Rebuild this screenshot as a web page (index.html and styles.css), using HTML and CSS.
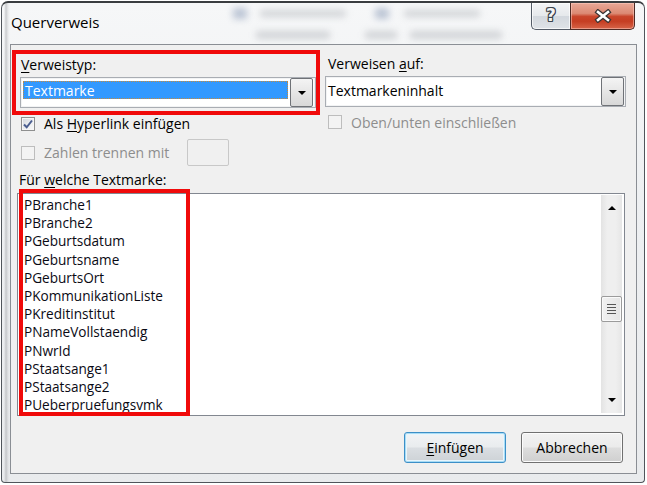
FILE: index.html
```html
<!DOCTYPE html>
<html lang="de">
<head>
<meta charset="utf-8">
<title>Querverweis</title>
<link rel="stylesheet" href="styles.css">
</head>
<body>
<div class="window">
  <div class="glass">
    <span class="blob b1"></span><span class="blob b2"></span><span class="blob b3"></span><span class="blob b4"></span>
    <span class="blob b5"></span><span class="blob b6"></span><span class="blob b7"></span>
  </div>
  <div class="titlebar">
    <span class="title">Querverweis</span>
    <div class="caption-btns">
      <div class="cbtn help">?</div>
      <div class="cbtn close">
        <svg width="18" height="14" viewBox="0 0 18 14"><path d="M4 3 L14 11 M14 3 L4 11" stroke="#3a3434" stroke-width="5" stroke-linecap="square" fill="none"/><path d="M4 3 L14 11 M14 3 L4 11" stroke="#fff" stroke-width="2.6" stroke-linecap="square" fill="none"/></svg>
      </div>
    </div>
  </div>
  <div class="client">
    <div class="top">
      <div class="col-left">
        <div class="mark box1">
          <div class="label"><u>V</u>erweistyp:</div>
          <div class="combo">
            <div class="combo-value selected">Textmarke</div>
            <div class="drop"><span class="tri-down"></span></div>
          </div>
        </div>
        <div class="check-row row1">
          <span class="cb"><svg width="12" height="12" viewBox="0 0 12 12"><path d="M2 6.5 L4.7 9.3 L10 2.5" stroke="#4a5d8f" stroke-width="2" fill="none"/></svg></span>
          <span class="cb-text">Als <u>H</u>yperlink einfügen</span>
        </div>
        <div class="check-row row2">
          <span class="cb disabled"></span>
          <span class="cb-text disabled-text zahlen">Zahlen trennen mit</span>
          <span class="small-input"></span>
        </div>
      </div>
      <div class="col-right">
        <div class="label right-label">Verweisen <u>a</u>uf:</div>
        <div class="combo">
          <div class="combo-value plain">Textmarkeninhalt</div>
          <div class="drop"><span class="tri-down"></span></div>
        </div>
        <div class="check-row row-right">
          <span class="cb disabled"></span>
          <span class="cb-text disabled-text">Oben/unten einschließen</span>
        </div>
      </div>
    </div>
    <div class="label list-label">Für <u>w</u>elche Textmarke:</div>
    <div class="listbox">
      <div class="items">
        <div class="item">PBranche1</div>
        <div class="item">PBranche2</div>
        <div class="item">PGeburtsdatum</div>
        <div class="item">PGeburtsname</div>
        <div class="item">PGeburtsOrt</div>
        <div class="item">PKommunikationListe</div>
        <div class="item">PKreditinstitut</div>
        <div class="item">PNameVollstaendig</div>
        <div class="item">PNwrId</div>
        <div class="item">PStaatsange1</div>
        <div class="item">PStaatsange2</div>
        <div class="item">PUeberpruefungsvmk</div>
      </div>
      <div class="scrollbar">
        <div class="sb-btn up"><span class="tri-up"></span></div>
        <div class="sb-track">
          <div class="thumb"><span></span><span></span><span></span><span></span></div>
        </div>
        <div class="sb-btn down"><span class="tri-down"></span></div>
      </div>
      <div class="mark box2"></div>
    </div>
    <div class="buttons">
      <div class="btn default"><u>E</u>infügen</div>
      <div class="btn">Abbrechen</div>
    </div>
  </div>
</div>
</body>
</html>
```
FILE: styles.css
```css
* { box-sizing: border-box; }

html, body {
  margin: 0;
  padding: 0;
}

body {
  width: 647px;
  height: 485px;
  overflow: hidden;
  background: #ffffff;
  font-family: "Open Sans", "Noto Sans", sans-serif;
  font-size: 14px;
  color: #000;
}

u { text-decoration: underline; text-underline-offset: 2px; }

.window {
  position: relative;
  margin: 1px 0 0 1px;
  width: 644px;
  height: 482px;
  border: 1px solid #50555b;
  border-top: 2px solid #3a3d40;
  border-radius: 7px 7px 4px 4px;
  background:
    linear-gradient(to right, transparent 2px, rgba(150,152,156,0.45) 4px, rgba(200,202,205,0.3) 6px, transparent 8px),
    linear-gradient(to bottom, #f6f7f8 0%, #eef0f2 40%, #e9ebed 100%);
  display: flex;
  flex-direction: column;
  overflow: hidden;
}

.glass {
  position: absolute;
  left: 0; top: 0; right: 0; height: 42px;
  pointer-events: none;
}

.blob {
  position: absolute;
  background: #b4b8bd;
  filter: blur(3.5px);
  border-radius: 2px;
  opacity: 0.55;
}
.b1 { left: 231px; top: 5px; width: 14px; height: 11px; background: #8c9cb8; }
.b2 { left: 258px; top: 7px; width: 86px; height: 7px; }
.b3 { left: 373px; top: 5px; width: 14px; height: 11px; background: #8c9cb8; }
.b4 { left: 402px; top: 7px; width: 76px; height: 7px; }
.b5 { left: 254px; top: 28px; width: 74px; height: 8px; }
.b6 { left: 363px; top: 28px; width: 32px; height: 8px; }
.b7 { left: 408px; top: 28px; width: 92px; height: 8px; }

.titlebar {
  position: relative;
  height: 41px;
  display: flex;
  align-items: flex-start;
  flex: none;
}

.title {
  margin: 9px 0 0 9px;
  font-size: 15px;
  line-height: 20px;
  color: #000;
}

.caption-btns {
  margin: 0 9px 0 auto;
  display: flex;
  height: 27px;
}

.cbtn {
  height: 27px;
  border: 1px solid #535b66;
  border-top: none;
  display: flex;
  align-items: center;
  justify-content: center;
}

.help {
  width: 39px;
  border-radius: 0 0 0 5px;
  border-right: none;
  background: linear-gradient(to bottom, #f3f4f6 0%, #e6e9ec 48%, #d3d8de 52%, #dfe3e7 100%);
  box-shadow: inset 0 0 0 1px rgba(255,255,255,0.7);
  font-family: "DejaVu Sans", sans-serif;
  font-weight: bold;
  font-size: 17px;
  color: #f4f4f4;
  text-shadow: 1px 0 0 #3c434d, -1px 0 0 #3c434d, 0 1px 0 #3c434d, 0 -1px 0 #3c434d, 1px 1px 0 #3c434d, -1px -1px 0 #3c434d, 1px -1px 0 #3c434d, -1px 1px 0 #3c434d;
  line-height: 1;
  padding-bottom: 1px;
}

.close {
  width: 65px;
  border-radius: 0 0 5px 0;
  border-color: #4e2a24;
  background: linear-gradient(to bottom, #e9a897 0%, #dc8a74 40%, #c9462c 52%, #c53d22 70%, #d76448 100%);
  box-shadow: inset 0 0 0 1px rgba(255,210,200,0.5);
}

.client {
  margin: 0 0 0 8px;
  width: 627px;
  height: 430px;
  border: 1px solid #8a8e94;
  background: #f0f0f0;
  padding-top: 5px;
  display: flex;
  flex-direction: column;
  flex: none;
}

.top {
  display: flex;
  align-items: flex-start;
}

.col-left {
  margin-left: 1px;
  width: 308px;
}

.mark {
  border: 4px solid #f00a0a;
}

.box1 {
  padding: 2px 0 3px 4px;
}

.label {
  height: 18px;
  line-height: 18px;
  font-size: 14px;
  white-space: nowrap;
}

.box1 .label { padding-left: 1px; }

.combo {
  margin-top: 3px;
  height: 31px;
  border: 1px solid #a9adb3;
  background: #ffffff;
  display: flex;
  align-items: stretch;
  box-shadow: inset 0 0 0 1px #f2f3f4;
}

.combo-value {
  flex: 1;
  font-size: 14px;
  white-space: nowrap;
}

.combo-value.selected {
  margin: 3px 2px 8px 2px;
  background: #3399ff;
  color: #fff;
  border: 1px dotted #c88a3c;
  padding-left: 1px;
  line-height: 17px;
}

.combo-value.plain {
  padding-left: 2px;
  line-height: 27px;
}

.drop {
  width: 23px;
  margin: 0 2px 0 0;
  border: 1px solid #6f7277;
  border-radius: 2px;
  background: linear-gradient(to bottom, #f4f4f4 0%, #e6e6e6 50%, #d8d8d8 100%);
  display: flex;
  align-items: center;
  justify-content: center;
}

.tri-down {
  width: 0; height: 0;
  border-left: 4px solid transparent;
  border-right: 4px solid transparent;
  border-top: 4px solid #000;
}

.tri-up {
  width: 0; height: 0;
  border-left: 4px solid transparent;
  border-right: 4px solid transparent;
  border-bottom: 4px solid #000;
}

.check-row {
  display: flex;
  align-items: center;
  white-space: nowrap;
}

.row1 {
  height: 16px;
  margin-left: 9px;
  margin-top: 0;
  align-items: flex-start;
}
.row1 .cb { margin-top: 2px; }
.row1 .cb-text { line-height: 18px; margin-top: 0; }

.row2 {
  height: 27px;
  margin-left: 9px;
  margin-top: 8px;
}

.cb {
  width: 14px;
  height: 14px;
  flex: none;
  border: 1px solid #8e8f8f;
  background: linear-gradient(135deg, #d2d6dc 0%, #eef0f2 60%, #f8f8f8 100%);
  box-shadow: inset 0 0 0 1px #f6f6f6;
  display: flex;
  align-items: center;
  justify-content: center;
}

.cb.disabled {
  border-color: #bdbdbd;
  background: #f3f3f3;
  box-shadow: none;
}

.cb-text {
  margin-left: 9px;
  font-size: 14px;
}

.disabled-text { color: #8d8d8d; }

.zahlen {
  width: 143px;
}

.small-input {
  width: 42px;
  height: 27px;
  border: 1px solid #c8c8c8;
  border-radius: 2px;
  background: #f0f0f0;
}

.col-right {
  margin-left: 5px;
  width: 301px;
  padding-top: 5px;
}

.right-label { padding-left: 3px; }

.col-right .drop { margin-right: 1px; }

.row-right {
  height: 16px;
  margin-top: 7px;
  margin-left: 3px;
}

.list-label {
  margin-top: 5px;
  margin-left: 8px;
}

.listbox {
  position: relative;
  margin: 4px 0 0 6px;
  width: 608px;
  height: 223px;
  border: 1px solid #828790;
  background: #fff;
  display: flex;
}

.items {
  flex: 1;
  padding: 2px 0 0 6px;
  overflow: hidden;
  font-size: 13.6px;
  line-height: 18.2px;
  color: #0a0a14;
}

.item { white-space: nowrap; height: 18.2px; }

.scrollbar {
  width: 21px;
  margin: 1px 2px 2px 0;
  background: linear-gradient(to right, #e3e3e3, #efefef 30%, #efefef 70%, #e6e6e6);
  display: flex;
  flex-direction: column;
}

.sb-btn {
  height: 26px;
  flex: none;
  display: flex;
  align-items: center;
  justify-content: center;
}

.sb-track {
  flex: 1;
}

.thumb {
  margin-top: 75px;
  height: 26px;
  border: 1px solid #9b9b9b;
  border-radius: 2px;
  background: linear-gradient(to right, #f2f2f2, #e4e4e4);
  box-shadow: inset 0 0 0 1px #fafafa;
  display: flex;
  flex-direction: column;
  align-items: center;
  justify-content: center;
  gap: 2px;
}

.thumb span {
  display: block;
  width: 9px;
  height: 1px;
  background: #555;
}

.box2 {
  position: absolute;
  left: 1px;
  top: -5px;
  width: 171px;
  height: 227px;
}

.buttons {
  margin: 16px 13px 0 0;
  display: flex;
  justify-content: flex-end;
  gap: 15px;
}

.btn {
  width: 102px;
  height: 31px;
  border: 1px solid #707070;
  border-radius: 3px;
  background: linear-gradient(to bottom, #f2f2f2 0%, #ebebeb 48%, #dddddd 52%, #cfcfcf 100%);
  box-shadow: inset 0 0 0 1px #fcfcfc;
  display: flex;
  align-items: center;
  justify-content: center;
  font-size: 14px;
}

.btn.default {
  border-color: #3c8fc7;
  box-shadow: inset 0 0 0 1px #a8dcf5, inset 0 0 0 2px #e8f5fc;
  background: linear-gradient(to bottom, #f2f4f6 0%, #e9ecee 48%, #dadee2 52%, #cdd2d6 100%);
}
```
